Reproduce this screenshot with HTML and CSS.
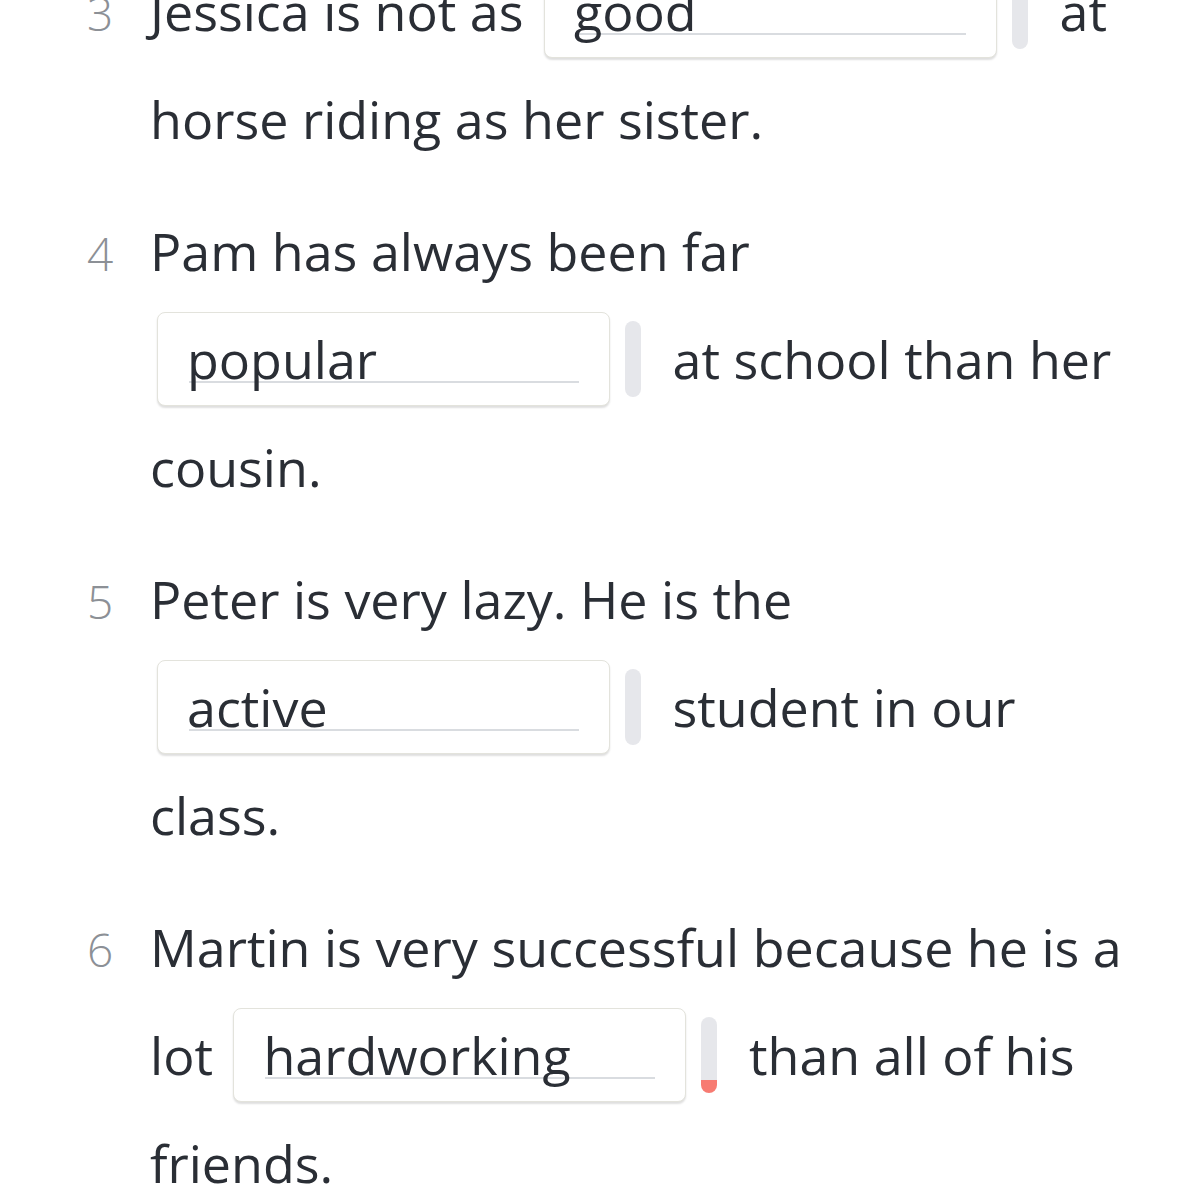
FILE: index.html
```html
<!DOCTYPE html>
<html lang="en">
<head>
<meta charset="utf-8">
<link rel="stylesheet" href="styles.css">
</head>
<body>
<div class="list">
  <div class="item">
    <span class="num">3</span>
    <p class="text">Jessica is not as <span class="gap"><span class="blank"><span class="word">good</span></span><span class="meter"></span></span> at horse riding as her sister.</p>
  </div>
  <div class="item">
    <span class="num">4</span>
    <p class="text">Pam has always been far <span class="gap"><span class="blank"><span class="word">popular</span></span><span class="meter"></span></span> at school than her cousin.</p>
  </div>
  <div class="item">
    <span class="num">5</span>
    <p class="text">Peter is very lazy. He is the <span class="gap"><span class="blank"><span class="word">active</span></span><span class="meter"></span></span> student in our class.</p>
  </div>
  <div class="item">
    <span class="num">6</span>
    <p class="text">Martin is very successful because he is a lot <span class="gap"><span class="blank"><span class="word">hardworking</span></span><span class="meter meter-low"></span></span> than all of his friends.</p>
  </div>
</div>
</body>
</html>
```

FILE: styles.css
```css
html, body {
  margin: 0;
  padding: 0;
  background: #ffffff;
}
body {
  font-family: "Open Sans", "Noto Sans", sans-serif;
  color: #2a2e35;
  overflow: hidden;
}
.list {
  margin-top: -43px;
  padding-left: 87px;
  width: 1062px;
}
.item {
  display: flex;
  align-items: baseline;
  margin-bottom: 24px;
}
.num {
  flex: 0 0 63px;
  font-size: 46px;
  font-weight: 300;
  color: #8c9096;
  line-height: 108px;
}
.text {
  margin: 0;
  flex: 1;
  font-size: 52px;
  line-height: 108px;
}
.gap {
  display: inline-flex;
  align-items: center;
  margin-left: 7px;
  margin-right: 18px;
}
.blank {
  box-sizing: border-box;
  width: 453px;
  height: 94px;
  padding: 10px 30px 0 29px;
  border: 1px solid #e3e3dc;
  border-radius: 8px;
  box-shadow: 0 2px 2px rgba(0, 0, 0, 0.13);
  background: #fff;
}
.word {
  display: block;
  line-height: 72px;
  background-image: linear-gradient(#d9dce0, #d9dce0);
  background-repeat: no-repeat;
  background-size: calc(100% - 2px) 2px;
  background-position: 2px 58px;
}
.meter {
  width: 16px;
  height: 76px;
  margin-left: 15px;
  border-radius: 8px;
  background: #e6e7eb;
}
.meter-low {
  background: linear-gradient(to top, #f77b72 0, #f77b72 13px, #e6e7eb 13px);
}
```
